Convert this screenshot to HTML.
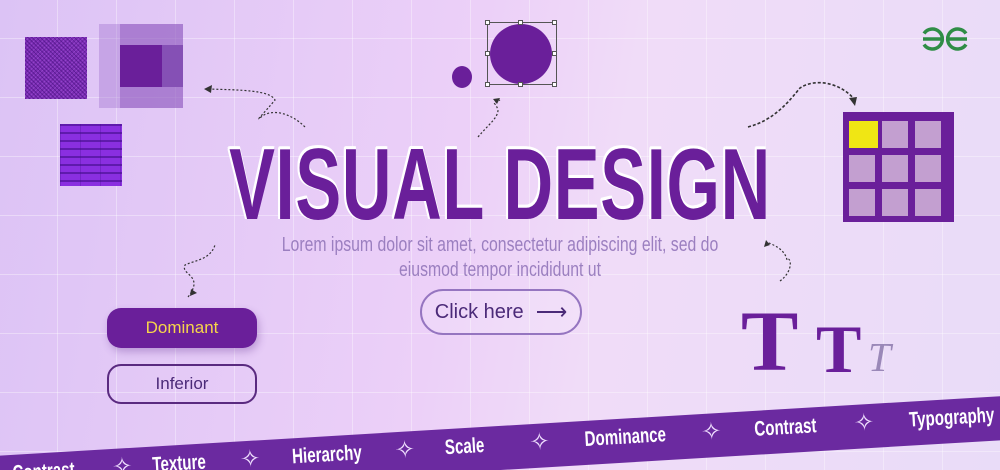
<!DOCTYPE html>
<html><head><style>
*{margin:0;padding:0;box-sizing:border-box}
html,body{width:1000px;height:470px;overflow:hidden}
#w{position:relative;width:1000px;height:470px;overflow:hidden;font-family:"Liberation Sans",sans-serif;
background:linear-gradient(100deg,#dcc3f5 0%,#ecd0f8 45%,#f0dcf8 60%,#e9dcf8 100%);}
.grid{position:absolute;inset:0;background-image:linear-gradient(rgba(255,255,255,.35) 1px,transparent 1px),linear-gradient(90deg,rgba(255,255,255,.35) 1px,transparent 1px);background-size:59px 59px;background-position:-2px 38px}
.a{position:absolute}
.cond{font-family:"Liberation Sans Narrow","Liberation Sans",sans-serif}
.title{left:500px;top:128px;transform:translateX(-50%) scaleX(.68);font-weight:bold;font-size:101px;color:#6a1f9a;white-space:nowrap;letter-spacing:1px;
text-shadow:-3px -2px 0 #fff,-2px -3px 0 #fff,-3px 0 0 #fff,0 -3px 0 #fff;}
.sub{left:500px;top:233px;width:800px;transform:translateX(-50%) scaleX(.79);text-align:center;color:#9b7fc0;font-size:20px;line-height:25px}
.btn{left:420px;top:289px;width:162px;height:46px;border:2px solid #9575c0;border-radius:23px;color:#4b2a78;font-size:20px;display:flex;align-items:center;justify-content:center;gap:12px;background:rgba(255,255,255,.15)}
.dom{left:107px;top:308px;width:150px;height:40px;border-radius:14px;background:#6a1f9a;color:#f7d54a;font-size:17px;display:flex;align-items:center;justify-content:center;box-shadow:2px 4px 8px rgba(90,40,140,.3)}
.inf{left:107px;top:364px;width:150px;height:40px;border-radius:14px;border:2px solid #5a2a80;color:#4b2a78;font-size:17px;display:flex;align-items:center;justify-content:center}
.gl{position:absolute}
.bt{font-family:"Liberation Sans Narrow","Liberation Sans",sans-serif;font-weight:bold;font-size:21px;fill:#fff}
.st{font-size:24px;fill:#f0e0ff}
</style></head><body><div id="w">
<div class="grid"></div>

<div class="a" style="left:25px;top:37px;width:62px;height:62px;background:#7a2cb0;background-image:repeating-linear-gradient(45deg,rgba(60,10,120,.5) 0 1px,transparent 1px 3px),repeating-linear-gradient(-45deg,rgba(170,90,230,.5) 0 1px,transparent 1px 3px)"></div>
<div class="a" style="left:99px;top:24px;width:84px;height:84px;background:rgba(150,100,200,.35)"></div>
<div class="a" style="left:120px;top:24px;width:63px;height:84px;background:rgba(130,70,180,.4)"></div>
<div class="a" style="left:120px;top:45px;width:42px;height:42px;background:#6a1f9a"></div>
<div class="a" style="left:162px;top:45px;width:21px;height:42px;background:#8550b5"></div>
<div class="a" style="left:60px;top:124px;width:62px;height:62px;background:#8a2fe0;background-image:repeating-linear-gradient(180deg,rgba(60,10,130,.55) 0 2px,transparent 2px 8px),repeating-linear-gradient(90deg,rgba(60,10,130,.25) 0 1px,transparent 1px 20px)"></div>

<div class="a" style="left:452px;top:66px;width:20px;height:22px;border-radius:50%;background:#6a1f9a"></div>
<div class="a" style="left:487px;top:22px;width:70px;height:63px;border:1px solid #555"></div>
<div class="a" style="left:490px;top:24px;width:62px;height:60px;border-radius:50%;background:#6a1f9a"></div>
<div class="a" style="left:485px;top:20px;width:5px;height:5px;background:#fff;border:1px solid #555"></div>
<div class="a" style="left:518px;top:20px;width:5px;height:5px;background:#fff;border:1px solid #555"></div>
<div class="a" style="left:552px;top:20px;width:5px;height:5px;background:#fff;border:1px solid #555"></div>
<div class="a" style="left:485px;top:51px;width:5px;height:5px;background:#fff;border:1px solid #555"></div>
<div class="a" style="left:552px;top:51px;width:5px;height:5px;background:#fff;border:1px solid #555"></div>
<div class="a" style="left:485px;top:82px;width:5px;height:5px;background:#fff;border:1px solid #555"></div>
<div class="a" style="left:518px;top:82px;width:5px;height:5px;background:#fff;border:1px solid #555"></div>
<div class="a" style="left:552px;top:82px;width:5px;height:5px;background:#fff;border:1px solid #555"></div>

<svg class="a" style="left:920px;top:25px" width="50" height="28" viewBox="0 0 50 28"><g fill="none" stroke="#2f8d46" stroke-width="3.5"><path d="M3 14H24M4 8.5A10 10 0 1 1 4 19.5"/><path d="M47 14H26M46 8.5A10 10 0 1 0 46 19.5"/></g></svg>

<div class="a" style="left:843px;top:112px;width:111px;height:110px;background:#6a1f9a"></div>
<div class="a" style="left:849px;top:121px;width:29px;height:27px;background:#f0e614"></div>
<div class="gl" style="left:882px;top:121px;width:26px;height:27px;background:#c39fd0"></div>
<div class="gl" style="left:915px;top:121px;width:26px;height:27px;background:#c39fd0"></div>
<div class="gl" style="left:849px;top:155px;width:26px;height:27px;background:#c39fd0"></div>
<div class="gl" style="left:882px;top:155px;width:26px;height:27px;background:#c39fd0"></div>
<div class="gl" style="left:915px;top:155px;width:26px;height:27px;background:#c39fd0"></div>
<div class="gl" style="left:849px;top:189px;width:26px;height:27px;background:#c39fd0"></div>
<div class="gl" style="left:882px;top:189px;width:26px;height:27px;background:#c39fd0"></div>
<div class="gl" style="left:915px;top:189px;width:26px;height:27px;background:#c39fd0"></div>

<svg class="a" style="left:0;top:0" width="1000" height="470" fill="none" stroke="#333" stroke-width="1.2" stroke-dasharray="2 2">
<path d="M305 127C290 112 270 108 260 118C255 122 265 112 275 100C270 90 240 90 208 89"/>
<path d="M478 137C488 125 498 118 498 110C495 100 490 105 500 100"/>
<path d="M748 127C775 120 790 100 800 88C815 78 840 82 855 100" stroke-dasharray="3 2" stroke-width="1.6"/>
<path d="M188 297C205 275 180 275 185 265C195 260 210 260 215 245"/>
<path d="M780 281C795 270 790 255 787 260C785 250 775 245 766 242"/>
</svg>
<svg class="a" style="left:0;top:0" width="1000" height="470" fill="#333">
<path d="M204 89l8-4-1 8z"/><path d="M500 98l-7 1 4 5z"/><path d="M855 106l-6-8 8-1z"/><path d="M190 296l1-7 6 4z"/><path d="M766 240l-2 7 6-2z"/>
</svg>

<div class="a cond title">VISUAL DESIGN</div>
<div class="a cond sub">Lorem ipsum dolor sit amet, consectetur adipiscing elit, sed do<br>eiusmod tempor incididunt ut</div>
<div class="a btn"><span>Click here</span><span style="font-size:22px">⟶</span></div>
<div class="a dom">Dominant</div>
<div class="a inf">Inferior</div>

<div class="a" style="left:741px;top:298px;font-family:'Liberation Serif',serif;font-weight:bold;font-size:86px;color:#6a1f9a;line-height:1">T</div>
<div class="a" style="left:816px;top:315px;font-family:'Liberation Serif',serif;font-weight:bold;font-size:68px;color:#6a1f9a;line-height:1">T</div>
<div class="a" style="left:868px;top:337px;font-family:'Liberation Serif',serif;font-style:italic;font-size:41px;color:#9a88b8;line-height:1">T</div>

<svg class="a" style="left:0;top:0;overflow:hidden" width="1000" height="470">
<g transform="rotate(-3.4 500 448)">
<rect x="-60" y="426" width="1140" height="44" fill="#6b2aa0"/>
<g transform="translate(12 451) scale(.72 1)"><text class="bt">Contrast</text></g>
<text class="st" x="112" y="452">✧</text>
<g transform="translate(152 451) scale(.72 1)"><text class="bt">Texture</text></g>
<text class="st" x="240" y="452">✧</text>
<g transform="translate(292 451) scale(.72 1)"><text class="bt">Hierarchy</text></g>
<text class="st" x="395" y="452">✧</text>
<g transform="translate(445 451) scale(.72 1)"><text class="bt">Scale</text></g>
<text class="st" x="530" y="452">✧</text>
<g transform="translate(585 451) scale(.72 1)"><text class="bt">Dominance</text></g>
<text class="st" x="702" y="452">✧</text>
<g transform="translate(755 451) scale(.72 1)"><text class="bt">Contrast</text></g>
<text class="st" x="855" y="452">✧</text>
<g transform="translate(910 451) scale(.72 1)"><text class="bt">Typography</text></g>
</g>
</svg>
</div></body></html>
